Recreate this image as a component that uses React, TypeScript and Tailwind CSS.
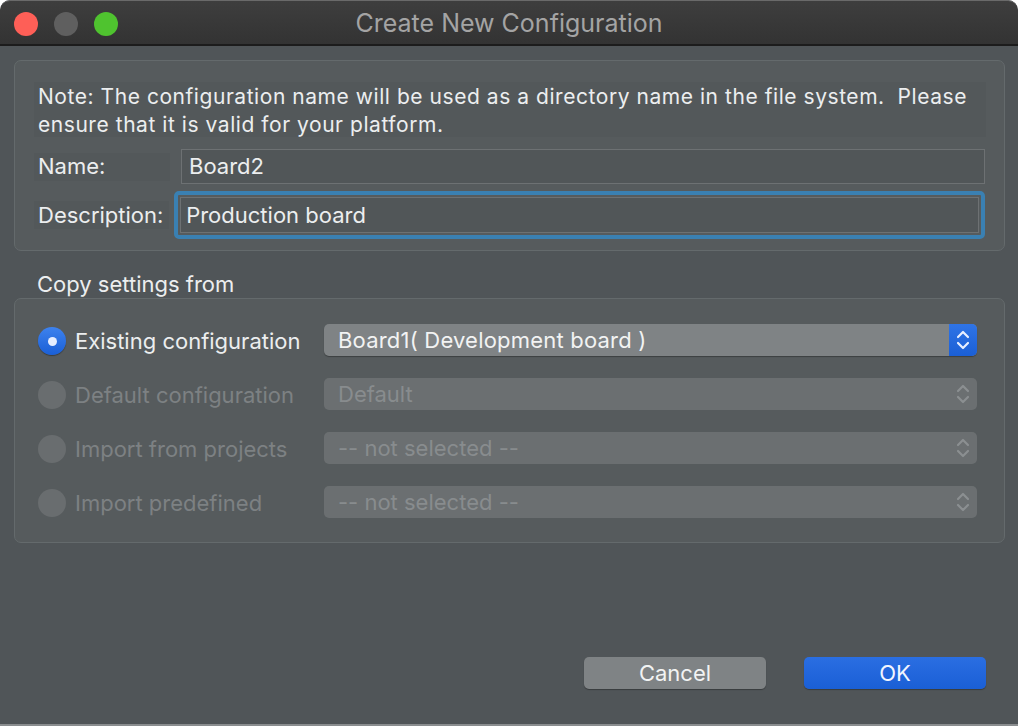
import React from "react";

const font = { fontFamily: "Inter, 'Noto Sans', 'Liberation Sans', sans-serif" };

function Chevrons({ color }: { color: string }) {
  return (
    <svg width="16" height="26" viewBox="0 0 16 26" fill="none">
      <path d="M3 10 L8 5 L13 10" stroke={color} strokeWidth="2.2" strokeLinecap="round" strokeLinejoin="round" />
      <path d="M3 16 L8 21 L13 16" stroke={color} strokeWidth="2.2" strokeLinecap="round" strokeLinejoin="round" />
    </svg>
  );
}

function Row({
  label,
  value,
  active,
}: {
  label: string;
  value: string;
  active?: boolean;
}) {
  return (
    <div className="flex items-center h-[32px]">
      <div className="w-[286px] flex items-center shrink-0 pt-[2px]">
        {active ? (
          <div className="w-[28px] h-[28px] rounded-full bg-gradient-to-b from-[#3d82ee] to-[#1a5fd6] shadow-[0_1px_1px_rgba(0,0,0,0.35)] flex items-center justify-center">
            <div className="w-[9px] h-[9px] rounded-full bg-[#e6eeff]" />
          </div>
        ) : (
          <div className="w-[28px] h-[28px] rounded-full bg-[#696d6f]" />
        )}
        <span
          className={`ml-[9px] text-[22px] whitespace-nowrap ${active ? "text-[#eceeef]" : "text-[#7d8183]"}`}
        >
          {label}
        </span>
      </div>
      {active ? (
        <div className="flex-1 h-[32px] rounded-[5px] bg-[#7f8385] flex items-center overflow-hidden shadow-[0_1px_1px_rgba(0,0,0,0.3)]">
          <span className="flex-1 pl-[14px] text-[22px] tracking-[0.2px] text-[#f2f3f3]">Board1( Development board )</span>
          <div className="w-[28px] h-full bg-gradient-to-b from-[#2f74e6] to-[#1a5fd6] flex items-center justify-center">
            <Chevrons color="#e8efff" />
          </div>
        </div>
      ) : (
        <div className="flex-1 h-[32px] rounded-[5px] bg-[#6b6f71] flex items-center">
          <span className="flex-1 pl-[14px] text-[22px] text-[#888c8e]">{value}</span>
          <div className="w-[28px] h-full flex items-center justify-center">
            <Chevrons color="#8b8f91" />
          </div>
        </div>
      )}
    </div>
  );
}

export default function App() {
  return (
    <div
      className="w-[1018px] h-[726px] bg-[#505558] rounded-t-[10px] overflow-hidden flex flex-col border-b-[2px] border-[#8a8d8f]"
      style={font}
    >
      {/* Title bar */}
      <div className="h-[46px] shrink-0 bg-gradient-to-b from-[#3e3e3e] to-[#333333] border-b-[2px] border-[#1c1c1c] border-t border-t-[#6a6a6a] rounded-t-[10px] flex items-center relative pt-[2px]">
        <div className="flex items-center gap-[16px] pl-[14px]">
          <div className="w-[24px] h-[24px] rounded-full bg-[#fe5f57]" />
          <div className="w-[24px] h-[24px] rounded-full bg-[#5f5f5f]" />
          <div className="w-[24px] h-[24px] rounded-full bg-[#4fc32f]" />
        </div>
        <div className="absolute inset-0 pt-[2px] flex items-center justify-center text-[25px] text-[#a4a4a4]">
          Create New Configuration
        </div>
      </div>

      <div className="flex-1 flex flex-col px-[14px] pt-[14px]">
        {/* Top group */}
        <div className="w-[991px] h-[191px] rounded-[7px] bg-[#565b5d] border border-[#646a6c] px-[19px] pt-[21px]">
          <div className="bg-[#53585a] w-[952px] h-[55px] pl-[4px] pt-[1px] text-[21px] leading-[28px] tracking-[0.55px] text-[#eceeef]">
            Note: The configuration name will be used as a directory name in the file system.&nbsp; Please ensure that it is valid for your platform.
          </div>
          <div className="flex items-center mt-[12px]">
            <div className="w-[136px] h-[28px] bg-[#53585a] pl-[4px] flex items-center text-[22px] text-[#eceeef]">Name:</div>
            <div className="ml-[11px] w-[804px] h-[35px] bg-[#515658] border border-[#6d7173] pl-[7px] flex items-center text-[22px] text-[#eceeef]">
              Board2
            </div>
          </div>
          <div className="flex items-center mt-[7px]">
            <div className="w-[136px] h-[28px] bg-[#53585a] pl-[4px] flex items-center text-[22px] text-[#eceeef] whitespace-nowrap">Description:</div>
            <div className="ml-[5px] w-[816px] h-[48px] rounded-[5px] border-[4px] border-[#3a80b2] p-[2px]">
              <div className="w-full h-full bg-[#515658] border border-[#6d7173] pl-[5px] flex items-center text-[22px] text-[#eceeef]">
                Production board
              </div>
            </div>
          </div>
        </div>

        <div className="pl-[23px] mt-[19px] h-[28px] flex items-center text-[22px] text-[#eceeef]">Copy settings from</div>

        {/* Second group */}
        <div className="w-[991px] h-[245px] rounded-[7px] bg-[#565b5d] border border-[#646a6c] pl-[23px] pr-[27px] pt-[25px] flex flex-col gap-[22px]">
          <Row label="Existing configuration" value="" active />
          <Row label="Default configuration" value="Default" />
          <Row label="Import from projects" value="-- not selected --" />
          <Row label="Import predefined" value="-- not selected --" />
        </div>

        {/* Buttons */}
        <div className="mt-[114px] flex justify-end gap-[38px] pr-[18px]">
          <button className="w-[182px] h-[32px] rounded-[5px] bg-[#7f8385] text-[22px] text-[#f2f3f3] shadow-[0_1px_1px_rgba(0,0,0,0.3)]">
            Cancel
          </button>
          <button className="w-[182px] h-[32px] rounded-[5px] bg-gradient-to-b from-[#2a6ee2] to-[#1a5fd6] text-[22px] text-[#f2f5ff] shadow-[0_1px_1px_rgba(0,0,0,0.3)]">
            OK
          </button>
        </div>
      </div>
    </div>
  );
}
